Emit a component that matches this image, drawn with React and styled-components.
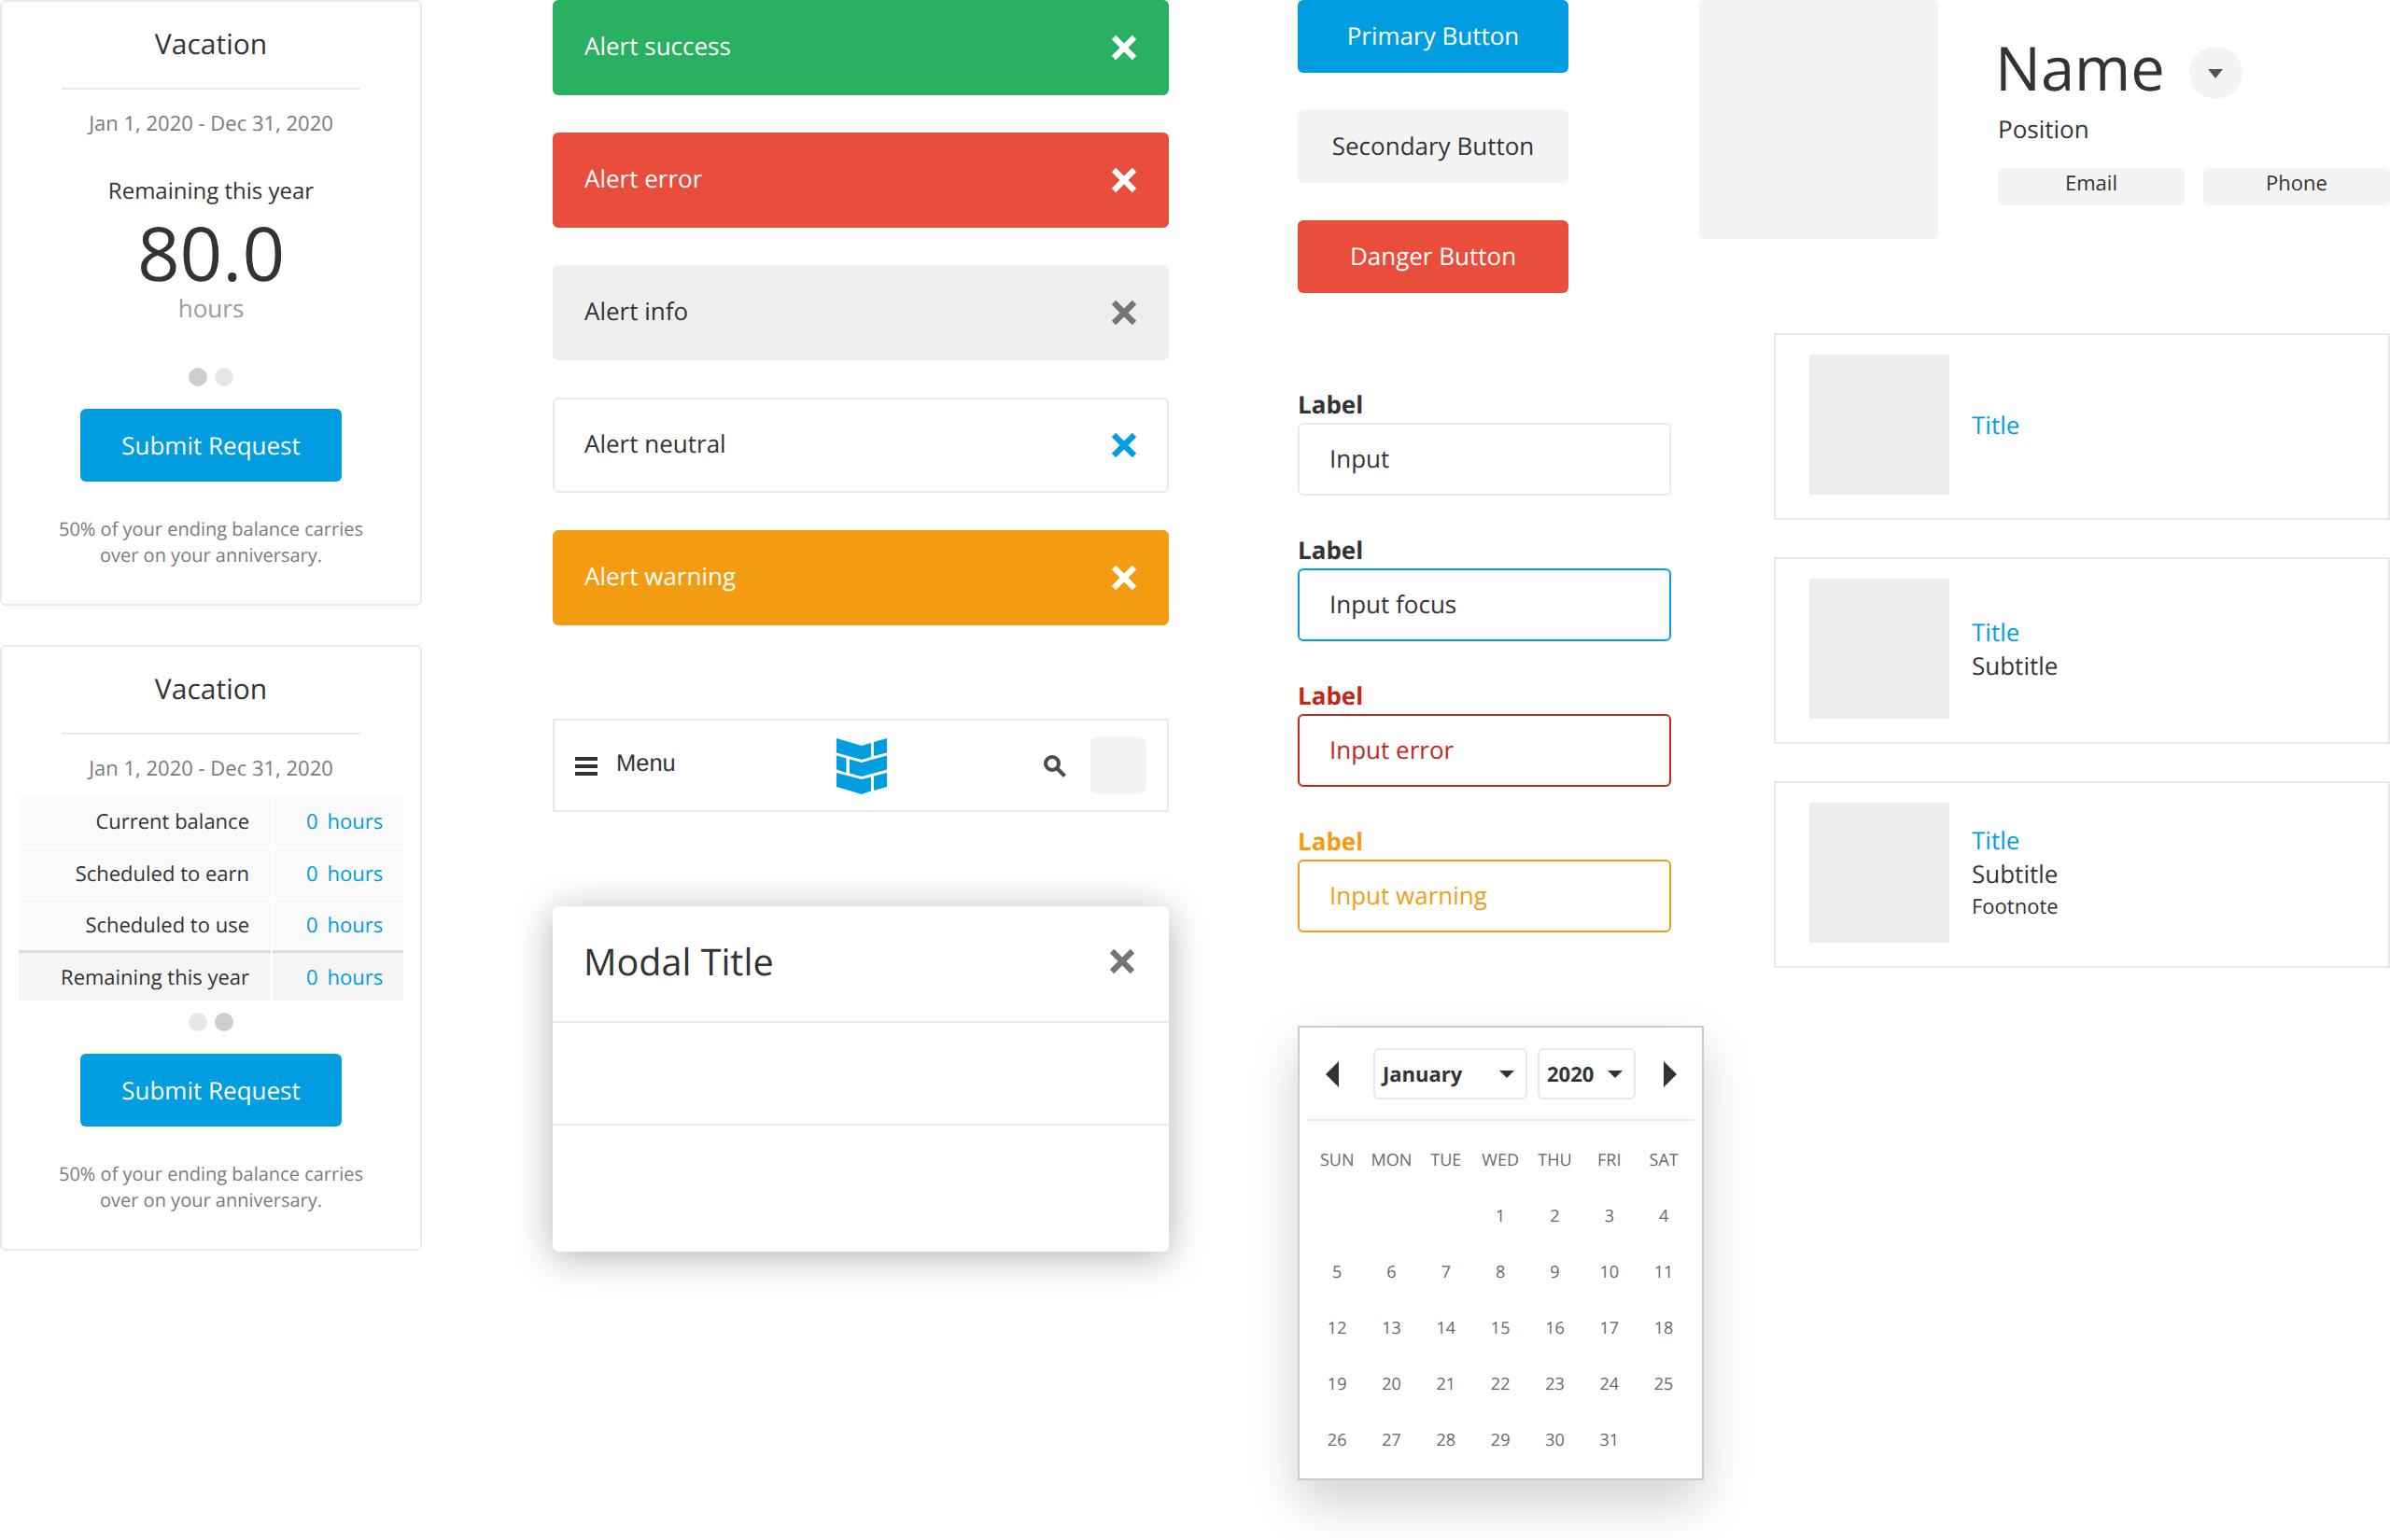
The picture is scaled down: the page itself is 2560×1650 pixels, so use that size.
import React from 'react';
import styled, { createGlobalStyle } from 'styled-components';

const BLUE = '#009de0';
const INK = '#333333';
const LINE = '#e9e9e9';

const GlobalStyle = createGlobalStyle`
  html, body {
    margin: 0;
    padding: 0;
    background: #fff;
    overflow-x: hidden;
  }
  body {
    font-family: 'Open Sans', 'Liberation Sans', sans-serif;
    color: ${INK};
    text-rendering: geometricPrecision;
  }
  * {
    box-sizing: border-box;
  }
`;

const Page = styled.div`
  display: flex;
  align-items: flex-start;
  width: 2560px;
  height: 1650px;
  overflow: hidden;
`;

const BalanceColumn = styled.div`
  display: flex;
  flex-direction: column;
  gap: 42px;
  width: 452px;
  flex: none;
`;

const Card = styled.section`
  display: flex;
  flex-direction: column;
  align-items: center;
  padding: 25px 18px 38px;
  border: 2px solid ${LINE};
  border-radius: 6px;
  background: #fff;
`;

const CardTitle = styled.h2`
  margin: 0;
  font-size: 30px;
  font-weight: 400;
  line-height: 40px;
`;

const Divider = styled.div`
  width: 320px;
  height: 2px;
  margin-top: 27px;
  background: ${LINE};
`;

const DateRange = styled.div`
  margin-top: 20px;
  font-size: 22px;
  line-height: 32px;
  color: #7b7b7b;
`;

const StatLabel = styled.div`
  margin-top: 41px;
  font-size: 24px;
  line-height: 32px;
`;

const StatValue = styled.div`
  margin-top: 10px;
  font-size: 80px;
  line-height: 80px;
`;

const StatUnit = styled.div`
  margin-top: 1px;
  font-size: 26px;
  line-height: 36px;
  color: #9a9ca1;
`;

const Dots = styled.div`
  display: flex;
  gap: 8px;
  margin-top: ${(p) => p.$top}px;
`;

const Dot = styled.span`
  width: 20px;
  height: 20px;
  border-radius: 50%;
  background: ${(p) => (p.$active ? '#cdcdcd' : '#e7e7e7')};
`;

const SubmitButton = styled.button`
  width: 280px;
  height: 78px;
  margin-top: 24px;
  border: 0;
  border-radius: 6px;
  background: ${BLUE};
  color: #fff;
  font: 400 26px 'Open Sans', sans-serif;
  text-rendering: geometricPrecision;
`;

const Footnote = styled.p`
  margin: 37px 0 0;
  font-size: 20px;
  line-height: 28px;
  text-align: center;
  color: #7b7b7b;
`;

const BalanceTable = styled.div`
  display: grid;
  grid-template-columns: 270px 140px;
  column-gap: 2px;
  row-gap: 2px;
  width: 412px;
  margin-top: 14px;
`;

const LabelCell = styled.div`
  height: ${(p) => (p.$total ? 54.5 : 53.5)}px;
  padding-right: 23px;
  border-top: ${(p) => (p.$total ? '3px solid #dcdcdc' : 'none')};
  margin-top: ${(p) => (p.$total ? -2 : 0)}px;
  background: ${(p) => (p.$total ? '#f5f5f5' : '#fafafa')};
  font-size: 22px;
  line-height: ${(p) => (p.$total ? 52 : 55)}px;
  text-align: right;
`;

const ValueCell = styled(LabelCell)`
  display: flex;
  gap: 10px;
  padding: 0 0 0 36px;
  color: ${BLUE};
  text-align: left;
`;

const AlertColumn = styled.div`
  width: 660px;
  margin-left: 140px;
  flex: none;
`;

const AlertStack = styled.div`
  display: flex;
  flex-direction: column;
  gap: 40px;
`;

const alertThemes = {
  success: { bg: '#29b060', fg: '#fff', icon: '#fff', border: '#29b060' },
  error: { bg: '#e94d3c', fg: '#fff', icon: '#fff', border: '#e94d3c' },
  info: { bg: '#eeeeee', fg: INK, icon: '#757575', border: '#eeeeee' },
  neutral: { bg: '#fff', fg: INK, icon: BLUE, border: LINE },
  warning: { bg: '#f39c12', fg: '#fff', icon: '#fff', border: '#f39c12' },
};

const AlertBar = styled.div`
  display: flex;
  align-items: center;
  justify-content: space-between;
  height: 102px;
  padding: 0 32px;
  border: 2px solid ${(p) => alertThemes[p.$kind].border};
  border-radius: 6px;
  background: ${(p) => alertThemes[p.$kind].bg};
  color: ${(p) => alertThemes[p.$kind].fg};
  font-size: 26px;
  line-height: 36px;

  span {
    margin-bottom: 4px;
  }
`;

const CloseMark = ({ color }) => (
  <svg width="28" height="28" viewBox="0 0 28 28" aria-hidden="true">
    <path d="M3 3 L25 25 M25 3 L3 25" stroke={color} strokeWidth="6.2" fill="none" />
  </svg>
);

const NavBar = styled.nav`
  display: grid;
  grid-template-columns: 1fr auto 1fr;
  align-items: center;
  height: 100px;
  margin-top: 100px;
  padding: 0 22px;
  border: 2px solid ${LINE};
`;

const NavMenu = styled.div`
  display: flex;
  align-items: center;
  gap: 20px;
`;

const Burger = styled.div`
  display: flex;
  flex-direction: column;
  gap: 4px;
  width: 24px;
  margin-top: 2px;

  span {
    height: 4px;
    background: ${INK};
  }
`;

const MenuText = styled.span`
  margin-bottom: 4px;
  font-family: 'Liberation Sans', Arial, sans-serif;
  font-size: 25.5px;
  line-height: 30px;
`;

const LogoSlot = styled.div`
  margin: 2px 0 0 2px;
`;

const NavActions = styled.div`
  display: flex;
  align-items: center;
  justify-content: flex-end;
  gap: 26px;

  svg {
    margin-top: 1px;
  }
`;

const AvatarSlot = styled.div`
  width: 60px;
  height: 60px;
  border-radius: 6px;
  background: #f4f4f4;
`;

const BrickLogo = () => (
  <svg width="54" height="60" viewBox="0 0 54 60" fill={BLUE} style={{ display: 'block' }} aria-hidden="true">
    <path d="M0 0 L27 8 L37 5 V20 L27 23 L0 15.5 Z" />
    <path d="M40 4 L54 0 V15.5 L40 19 Z" />
    <path d="M0 18.5 L10.5 21.5 V37 L0 33.5 Z" />
    <path d="M14 22.5 L27 26 L54 18.5 V33.5 L27 41 L14 37.5 Z" />
    <path d="M0 37 L27 44 L37 41.5 V56.5 L27 60 L0 52 Z" />
    <path d="M40 40.5 L54 37 V52 L40 56 Z" />
  </svg>
);

const SearchIcon = () => (
  <svg width="24" height="24" viewBox="0 0 24 24" fill="none" stroke="#4b4b4b" aria-hidden="true">
    <circle cx="9" cy="9" r="7" strokeWidth="4" />
    <path d="M14.5 14.5 L22.5 22.5" strokeWidth="4" />
  </svg>
);

const Modal = styled.div`
  height: 370px;
  margin-top: 101px;
  border-radius: 6px;
  background: #fff;
  box-shadow: 0 6px 42px rgba(0, 0, 0, 0.3);
`;

const ModalHeader = styled.header`
  display: flex;
  align-items: center;
  justify-content: space-between;
  height: 125px;
  padding: 0 36px 5px 33px;
  border-bottom: 2px solid ${LINE};
`;

const ModalTitle = styled.h3`
  margin: 0;
  font-size: 39.5px;
  font-weight: 400;
  line-height: 50px;
`;

const ModalBody = styled.div`
  height: 110px;
  border-bottom: 2px solid ${LINE};
`;

const FormColumn = styled.div`
  width: 400px;
  margin-left: 138px;
  flex: none;
`;

const ActionStack = styled.div`
  display: flex;
  flex-direction: column;
  gap: 40px;
`;

const actionThemes = {
  primary: { bg: BLUE, fg: '#fff' },
  secondary: { bg: '#f4f4f4', fg: INK },
  danger: { bg: '#e94d3c', fg: '#fff' },
};

const ActionButton = styled.button`
  width: 290px;
  height: 78px;
  padding: 0 0 2px;
  border: 0;
  border-radius: 6px;
  background: ${(p) => actionThemes[p.$kind].bg};
  color: ${(p) => actionThemes[p.$kind].fg};
  font: 400 26px 'Open Sans', sans-serif;
  text-rendering: geometricPrecision;
`;

const FieldStack = styled.div`
  display: flex;
  flex-direction: column;
  gap: 42px;
  margin-top: 103px;
`;

const fieldThemes = {
  plain: { label: INK, border: LINE, text: INK },
  focus: { label: INK, border: BLUE, text: INK },
  error: { label: '#c0281a', border: '#c0281a', text: '#c0281a' },
  warning: { label: '#f39c12', border: '#f39c12', text: '#f39c12' },
};

const Field = styled.div`
  display: flex;
  flex-direction: column;
  gap: 4px;
`;

const FieldLabel = styled.label`
  font-size: 26px;
  font-weight: 700;
  line-height: 32px;
  color: ${(p) => fieldThemes[p.$kind].label};
`;

const FieldBox = styled.div`
  display: flex;
  align-items: center;
  height: 78px;
  padding: 0 0 3px 32px;
  border: 2px solid ${(p) => fieldThemes[p.$kind].border};
  border-radius: 6px;
  font-size: 26px;
  color: ${(p) => fieldThemes[p.$kind].text};
`;

const Calendar = styled.div`
  width: 435px;
  margin-top: 100px;
  padding-bottom: 11px;
  border: 2px solid #cbcbcb;
  background: #fff;
  box-shadow: 0 24px 50px rgba(0, 0, 0, 0.18);
`;

const CalendarHeader = styled.div`
  display: flex;
  align-items: center;
  margin: 0 8px;
  padding: 22px 0 21px 20px;
  border-bottom: 2px solid ${LINE};
`;

const Pager = styled.span`
  width: 0;
  height: 0;
  margin-left: ${(p) => p.$gap}px;
  border-top: 14px solid transparent;
  border-bottom: 14px solid transparent;
  ${(p) => (p.$dir === 'left' ? `border-right: 14px solid #333;` : `border-left: 14px solid #333;`)}
`;

const Picker = styled.div`
  display: flex;
  align-items: center;
  justify-content: space-between;
  width: ${(p) => p.$width}px;
  height: 55px;
  margin-left: ${(p) => p.$gap}px;
  padding: 0 12px 0 ${(p) => p.$pad}px;
  border: 2px solid ${LINE};
  border-radius: 6px;
  font-size: 22px;
  font-weight: 700;
`;

const Caret = styled.span`
  width: 0;
  height: 0;
  border-left: 8px solid transparent;
  border-right: 8px solid transparent;
  border-top: 8px solid #333;
`;

const DayGrid = styled.div`
  display: grid;
  grid-template-columns: repeat(7, 58.33px);
  grid-auto-rows: 60px;
  margin: 12px 0 0 11px;
`;

const DayCell = styled.div`
  display: flex;
  align-items: center;
  justify-content: center;
  font-size: 18px;
  color: #686868;
`;

const ProfileColumn = styled.div`
  flex: none;
  width: 740px;
  margin-left: 30px;
`;

const Profile = styled.div`
  display: flex;
  gap: 64px;
`;

const PhotoSlot = styled.div`
  flex: none;
  width: 256px;
  height: 256px;
  border-radius: 6px;
  background: #f4f4f4;
`;

const ProfileInfo = styled.div`
  flex: 1;
  padding-top: 50px;
`;

const NameRow = styled.div`
  display: flex;
  align-items: center;
  gap: 26px;
`;

const Name = styled.h1`
  margin: 0 0 10px -3px;
  font-size: 65px;
  font-weight: 400;
  line-height: 46px;
`;

const NameToggle = styled.div`
  display: flex;
  align-items: center;
  justify-content: center;
  width: 57px;
  height: 56px;
  padding-top: 2px;
  border-radius: 50%;
  background: #f4f4f4;
`;

const Position = styled.div`
  margin-top: 16px;
  font-size: 26px;
  line-height: 32px;
`;

const ContactRow = styled.div`
  display: flex;
  gap: 20px;
  margin-top: 26px;
`;

const ContactButton = styled.button`
  width: 200px;
  height: 40px;
  padding: 0 0 8px;
  border: 0;
  border-radius: 6px;
  background: #f4f4f4;
  color: ${INK};
  font: 400 22px 'Open Sans', sans-serif;
  text-rendering: geometricPrecision;
`;

const ListStack = styled.div`
  display: flex;
  flex-direction: column;
  gap: 40px;
  width: 660px;
  margin: 101px 0 0 80px;
`;

const ListCard = styled.article`
  display: flex;
  align-items: center;
  gap: 24px;
  height: 200px;
  padding: 21px 0 25px 36px;
  border: 2px solid ${LINE};
`;

const ListImage = styled.div`
  flex: none;
  width: 150px;
  height: 150px;
  background: #ececec;
`;

const ListTitle = styled.div`
  font-size: 26px;
  line-height: 36px;
  color: ${BLUE};
`;

const ListSubtitle = styled.div`
  font-size: 26px;
  line-height: 36px;
`;

const ListFootnote = styled.div`
  font-size: 22px;
  line-height: 34px;
`;

const alerts = [
  ['success', 'Alert success'],
  ['error', 'Alert error'],
  ['info', 'Alert info'],
  ['neutral', 'Alert neutral'],
  ['warning', 'Alert warning'],
];

const fields = [
  ['plain', 'Input'],
  ['focus', 'Input focus'],
  ['error', 'Input error'],
  ['warning', 'Input warning'],
];

const balances = ['Current balance', 'Scheduled to earn', 'Scheduled to use', 'Remaining this year'];
const weekdays = ['SUN', 'MON', 'TUE', 'WED', 'THU', 'FRI', 'SAT'];
const days = [...Array(3).fill(''), ...Array.from({ length: 31 }, (_, i) => i + 1)];

const CarryOver = () => (
  <Footnote>
    50% of your ending balance carries
    <br />
    over on your anniversary.
  </Footnote>
);

const App = () => (
  <>
    <GlobalStyle />
    <Page>
      <BalanceColumn>
        <Card>
          <CardTitle>Vacation</CardTitle>
          <Divider />
          <DateRange>Jan 1, 2020 - Dec 31, 2020</DateRange>
          <StatLabel>Remaining this year</StatLabel>
          <StatValue>80.0</StatValue>
          <StatUnit>hours</StatUnit>
          <Dots $top={46}>
            <Dot $active />
            <Dot />
          </Dots>
          <SubmitButton>Submit Request</SubmitButton>
          <CarryOver />
        </Card>
        <Card>
          <CardTitle>Vacation</CardTitle>
          <Divider />
          <DateRange>Jan 1, 2020 - Dec 31, 2020</DateRange>
          <BalanceTable>
            {balances.map((label, i) => (
              <React.Fragment key={label}>
                <LabelCell $total={i === 3}>{label}</LabelCell>
                <ValueCell $total={i === 3}>
                  <span>0</span>
                  <span>hours</span>
                </ValueCell>
              </React.Fragment>
            ))}
          </BalanceTable>
          <Dots $top={13}>
            <Dot />
            <Dot $active />
          </Dots>
          <SubmitButton>Submit Request</SubmitButton>
          <CarryOver />
        </Card>
      </BalanceColumn>

      <AlertColumn>
        <AlertStack>
          {alerts.map(([kind, text]) => (
            <AlertBar key={kind} $kind={kind}>
              <span>{text}</span>
              <CloseMark color={alertThemes[kind].icon} />
            </AlertBar>
          ))}
        </AlertStack>
        <NavBar>
          <NavMenu>
            <Burger>
              <span />
              <span />
              <span />
            </Burger>
            <MenuText>Menu</MenuText>
          </NavMenu>
          <LogoSlot>
            <BrickLogo />
          </LogoSlot>
          <NavActions>
            <SearchIcon />
            <AvatarSlot />
          </NavActions>
        </NavBar>
        <Modal>
          <ModalHeader>
            <ModalTitle>Modal Title</ModalTitle>
            <CloseMark color="#757575" />
          </ModalHeader>
          <ModalBody />
        </Modal>
      </AlertColumn>

      <FormColumn>
        <ActionStack>
          <ActionButton $kind="primary">Primary Button</ActionButton>
          <ActionButton $kind="secondary">Secondary Button</ActionButton>
          <ActionButton $kind="danger">Danger Button</ActionButton>
        </ActionStack>
        <FieldStack>
          {fields.map(([kind, text]) => (
            <Field key={kind}>
              <FieldLabel $kind={kind}>Label</FieldLabel>
              <FieldBox $kind={kind}>{text}</FieldBox>
            </Field>
          ))}
        </FieldStack>
        <Calendar>
          <CalendarHeader>
            <Pager $dir="left" $gap={0} />
            <Picker $width={165} $gap={37} $pad={8}>
              January
              <Caret />
            </Picker>
            <Picker $width={105} $gap={11} $pad={8}>
              2020
              <Caret />
            </Picker>
            <Pager $dir="right" $gap={30} />
          </CalendarHeader>
          <DayGrid>
            {weekdays.map((d) => (
              <DayCell key={d}>{d}</DayCell>
            ))}
            {days.map((d, i) => (
              <DayCell key={i}>{d}</DayCell>
            ))}
          </DayGrid>
        </Calendar>
      </FormColumn>

      <ProfileColumn>
        <Profile>
          <PhotoSlot />
          <ProfileInfo>
            <NameRow>
              <Name>Name</Name>
              <NameToggle>
                <svg width="16" height="10" viewBox="0 0 16 10" aria-hidden="true">
                  <path d="M0 0 H16 L8 10 Z" fill="#555" />
                </svg>
              </NameToggle>
            </NameRow>
            <Position>Position</Position>
            <ContactRow>
              <ContactButton>Email</ContactButton>
              <ContactButton>Phone</ContactButton>
            </ContactRow>
          </ProfileInfo>
        </Profile>
        <ListStack>
          <ListCard>
            <ListImage />
            <div>
              <ListTitle>Title</ListTitle>
            </div>
          </ListCard>
          <ListCard>
            <ListImage />
            <div>
              <ListTitle>Title</ListTitle>
              <ListSubtitle>Subtitle</ListSubtitle>
            </div>
          </ListCard>
          <ListCard>
            <ListImage />
            <div>
              <ListTitle>Title</ListTitle>
              <ListSubtitle>Subtitle</ListSubtitle>
              <ListFootnote>Footnote</ListFootnote>
            </div>
          </ListCard>
        </ListStack>
      </ProfileColumn>
    </Page>
  </>
);

export default App;
